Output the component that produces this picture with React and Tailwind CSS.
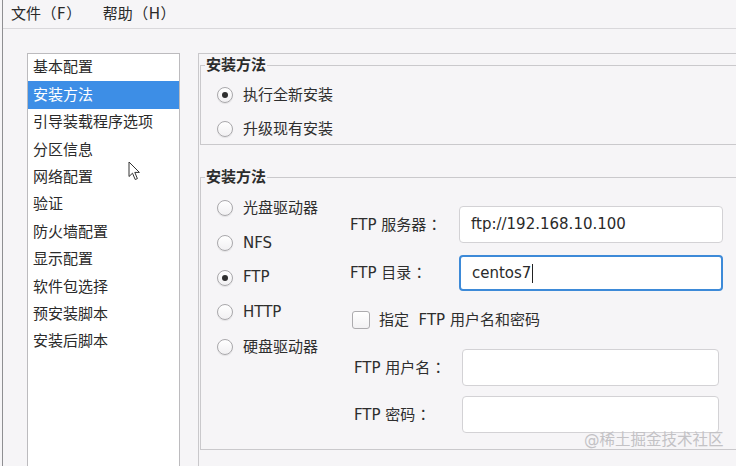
import React from 'react';

const navItems = [
  '基本配置',
  '安装方法',
  '引导装载程序选项',
  '分区信息',
  '网络配置',
  '验证',
  '防火墙配置',
  '显示配置',
  '软件包选择',
  '预安装脚本',
  '安装后脚本',
];

const sources = [
  { label: '光盘驱动器', checked: false },
  { label: 'NFS', checked: false },
  { label: 'FTP', checked: true },
  { label: 'HTTP', checked: false },
  { label: '硬盘驱动器', checked: false },
];

function Radio({ checked }) {
  return (
    <span className="flex h-[16px] w-[16px] shrink-0 items-center justify-center rounded-full border border-[#a9a8ab] bg-gradient-to-b from-white to-[#f1f0f2] shadow-[0_1px_1px_rgba(0,0,0,0.08)]">
      {checked && <span className="h-[6px] w-[6px] rounded-full bg-[#2f2f2f]" />}
    </span>
  );
}

function GroupTitle({ children }) {
  return (
    <span className="absolute -top-[11px] left-[4px] bg-[#f6f5f7] px-px font-bold leading-[20px] text-[#2c2c2c]">
      {children}
    </span>
  );
}

function Field({ value, focused, caret, className }) {
  return (
    <div
      className={`flex h-full items-center rounded-[4px] bg-white pl-[11px] ${
        focused ? 'border-2 border-[#3d8ad8]' : 'border border-[#d3d2d5]'
      } ${className || ''}`}
    >
      <span className="text-[#2a2a2a]">{value}</span>
      {caret && <span className="ml-px h-[19px] w-px bg-[#222]" />}
    </div>
  );
}

// full-width punctuation, centred in its cell like the GTK font does
function Punct({ children }) {
  return (
    <span className="inline-block w-[16px] text-center font-['Noto_Sans_CJK_JP','Noto_Sans_CJK_SC',sans-serif]">
      {children}
    </span>
  );
}

export default function App() {
  return (
    <div className="relative h-[466px] w-[736px] overflow-hidden bg-[#f6f5f7] pl-[2px] font-['DejaVu_Sans','Noto_Sans_CJK_SC',sans-serif] text-[15px] text-[#2e2e2e]">
      <div className="flex h-full flex-col border-l border-[#8f8f92]">
        {/* menu bar */}
        <div className="flex h-[29px] shrink-0 items-center gap-[21px] border-b border-[#d9d8db] pb-[1px] pl-[8px] text-[#2a2a2a]">
          <span>
            文件<Punct>（</Punct>F<Punct>）</Punct>
          </span>
          <span>
            帮助<Punct>（</Punct>H<Punct>）</Punct>
          </span>
        </div>

        <div className="flex flex-1 pl-[24px] pt-[24px]">
          {/* side list */}
          <div className="h-[430px] w-[153px] shrink-0 border border-[#bcbbbe] bg-white">
            {navItems.map((item, i) => (
              <div
                key={item}
                className={`flex h-[27.4px] items-center pl-[5px] ${
                  i === 1 ? 'bg-[#3d8ee6] text-white' : 'text-[#2a2a2a]'
                }`}
              >
                {item}
              </div>
            ))}
          </div>

          {/* main panel */}
          <div className="ml-[18px] h-[430px] w-[600px] shrink-0 border-l border-t border-[#c9c8cb] pl-px">
            <div className="relative mt-[11px] flex w-[600px] flex-col gap-[4px] border border-[#cac9cc] pl-[16px] pt-[14px]">
              <GroupTitle>安装方法</GroupTitle>
              <div className="flex h-[30px] items-center gap-[10px]">
                <Radio checked />
                <span>执行全新安装</span>
              </div>
              <div className="flex h-[30px] items-center gap-[10px]">
                <Radio />
                <span>升级现有安装</span>
              </div>
            </div>

            <div className="relative mt-[32px] flex h-[273px] w-[600px] border border-[#cac9cc]">
              <GroupTitle>安装方法</GroupTitle>
              <div className="flex w-[149px] shrink-0 flex-col pl-[16px] pt-[13px]">
                {sources.map((s) => (
                  <div key={s.label} className="flex h-[34.7px] items-center gap-[10px]">
                    <Radio checked={s.checked} />
                    <span>{s.label}</span>
                  </div>
                ))}
              </div>

              <div className="flex flex-col pt-[28px]">
                <div className="flex h-[37px] items-center">
                  <span className="w-[109px] shrink-0">
                    FTP 服务器<Punct>：</Punct>
                  </span>
                  <Field value="ftp://192.168.10.100" className="w-[264px]" />
                </div>
                <div className="mt-[12px] flex h-[36px] items-center">
                  <span className="w-[109px] shrink-0">
                    FTP 目录<Punct>：</Punct>
                  </span>
                  <Field value="centos7" focused caret className="w-[264px]" />
                </div>
                <div className="mt-[20px] flex h-[18px] items-center gap-[9px] pl-[2px]">
                  <span className="h-[18px] w-[18px] shrink-0 rounded-[3px] border border-[#acabae] bg-gradient-to-b from-white to-[#f2f1f3]" />
                  <span>指定&nbsp; FTP 用户名和密码</span>
                </div>
                <div className="mt-[20px] flex h-[37px] items-center pl-[4px]">
                  <span className="w-[108px] shrink-0">
                    FTP 用户名<Punct>：</Punct>
                  </span>
                  <Field value="" className="w-[257px]" />
                </div>
                <div className="mt-[10px] flex h-[37px] items-center pl-[4px]">
                  <span className="w-[108px] shrink-0">
                    FTP 密码<Punct>：</Punct>
                  </span>
                  <Field value="" className="w-[257px]" />
                </div>
              </div>
            </div>
          </div>
        </div>
      </div>

      {/* mouse pointer */}
      <svg className="absolute left-[128px] top-[161px]" width="13" height="20" viewBox="0 0 13 20">
        <path d="M1 1 L1 15.5 L4.5 12.2 L7.2 18.5 L9.4 17.6 L6.8 11.4 L11.4 11.4 Z" fill="#fff" stroke="#333" strokeWidth="1" strokeLinejoin="round" />
      </svg>

      {/* watermark */}
      <span className="absolute left-[584px] top-[429px] text-[15.5px] leading-[22px] text-[#c3c2c5]">
        @稀土掘金技术社区
      </span>
    </div>
  );
}
